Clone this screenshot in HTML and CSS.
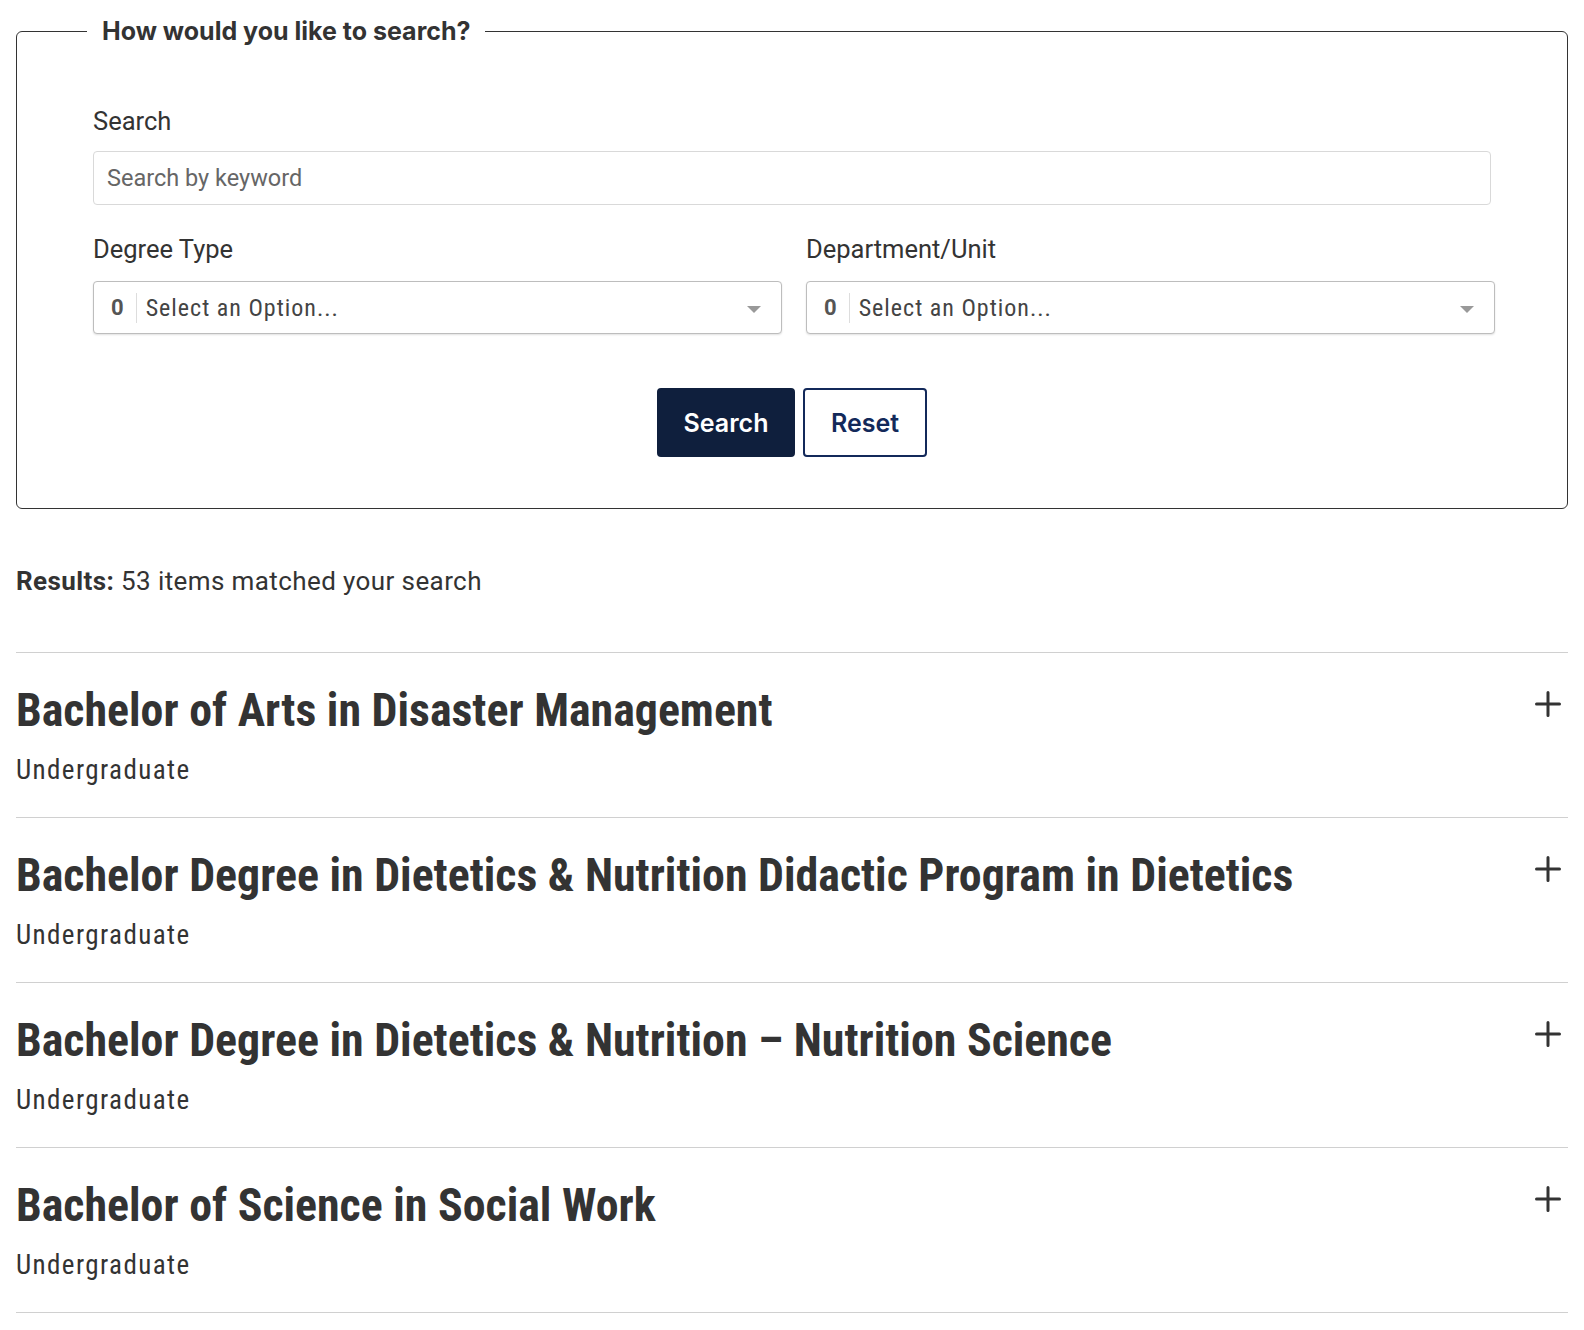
FILE: index.html
```html
<!DOCTYPE html>
<html lang="en">
<head>
<meta charset="utf-8">
<title>Program Search</title>
<link rel="stylesheet" href="styles.css">
</head>
<body>
<main class="page">
  <form class="search-form">
    <fieldset class="search-box">
      <legend class="search-legend">How would you like to search?</legend>
      <div class="field">
        <label class="field-label" for="kw">Search</label>
        <input class="text-input" id="kw" type="text" placeholder="Search by keyword">
      </div>
      <div class="select-row">
        <div class="field">
          <span class="field-label">Degree Type</span>
          <div class="select">
            <span class="select-count">0</span>
            <span class="select-text">Select an Option...</span>
            <span class="select-arrow"></span>
          </div>
        </div>
        <div class="field">
          <span class="field-label">Department/Unit</span>
          <div class="select">
            <span class="select-count">0</span>
            <span class="select-text">Select an Option...</span>
            <span class="select-arrow"></span>
          </div>
        </div>
      </div>
      <div class="actions">
        <button type="button" class="btn btn-primary">Search</button>
        <button type="button" class="btn btn-outline">Reset</button>
      </div>
    </fieldset>
  </form>

  <p class="results"><strong>Results:</strong> 53 items matched your search</p>

  <ul class="program-list">
    <li class="program">
      <div class="program-head">
        <h2 class="program-title">Bachelor of Arts in Disaster Management</h2>
        <svg class="plus" viewBox="0 0 26 26" aria-hidden="true"><path d="M13 1.5v23M1.5 13h23"/></svg>
      </div>
      <p class="program-type">Undergraduate</p>
    </li>
    <li class="program">
      <div class="program-head">
        <h2 class="program-title">Bachelor Degree in Dietetics &amp; Nutrition Didactic Program in Dietetics</h2>
        <svg class="plus" viewBox="0 0 26 26" aria-hidden="true"><path d="M13 1.5v23M1.5 13h23"/></svg>
      </div>
      <p class="program-type">Undergraduate</p>
    </li>
    <li class="program">
      <div class="program-head">
        <h2 class="program-title">Bachelor Degree in Dietetics &amp; Nutrition – Nutrition Science</h2>
        <svg class="plus" viewBox="0 0 26 26" aria-hidden="true"><path d="M13 1.5v23M1.5 13h23"/></svg>
      </div>
      <p class="program-type">Undergraduate</p>
    </li>
    <li class="program">
      <div class="program-head">
        <h2 class="program-title">Bachelor of Science in Social Work</h2>
        <svg class="plus" viewBox="0 0 26 26" aria-hidden="true"><path d="M13 1.5v23M1.5 13h23"/></svg>
      </div>
      <p class="program-type">Undergraduate</p>
    </li>
  </ul>
</main>
</body>
</html>
```
FILE: styles.css
```css
* { box-sizing: border-box; }

html, body {
  margin: 0;
  padding: 0;
  background: #fff;
}

body {
  font-family: Roboto, "Liberation Sans", sans-serif;
  color: #333;
}

.page {
  padding: 16px 16px 0;
}

.search-form { margin: 0; }

.search-box {
  margin: 0;
  border: 1px solid #333;
  border-radius: 6px;
  padding: 60px 76px 51px;
  min-width: 0;
}

.search-legend {
  font-family: Inter, Roboto, sans-serif;
  font-weight: 700;
  font-size: 25px;
  line-height: 30px;
  color: #333;
  padding: 0 15px;
  margin-left: -6px;
}

.field {
  display: flex;
  flex-direction: column;
}

.field-label {
  font-size: 25.5px;
  line-height: 30px;
  color: #333;
  margin-bottom: 15px;
}

.select-row .field-label {
  margin-bottom: 17px;
}

.text-input {
  display: block;
  width: 100%;
  height: 54px;
  border: 1px solid #d9d9d9;
  border-radius: 4px;
  background: #fff;
  padding: 0 13px;
  font-family: Roboto, sans-serif;
  font-size: 23.5px;
  color: #333;
  outline: none;
}

.text-input::placeholder { color: #666; }

.select-row {
  display: grid;
  grid-template-columns: 1fr 1fr;
  column-gap: 24px;
  margin-top: 29px;
  margin-right: -4px;
}

.select {
  display: flex;
  align-items: center;
  height: 53px;
  border: 1px solid #bdbdbd;
  border-radius: 4px;
  background: #fff;
  box-shadow: 0 1px 2px rgba(0,0,0,0.12);
  padding: 0 20px 0 17px;
}

.select-count {
  font-weight: 700;
  font-size: 22px;
  color: #555;
  padding-right: 12px;
  border-right: 1px solid #ddd;
  line-height: 30px;
}

.select-text {
  flex: 1;
  padding-left: 9px;
  font-family: "Roboto Condensed", Roboto, sans-serif;
  font-size: 24px;
  letter-spacing: 1px;
  color: #444;
}

.select-arrow {
  width: 0;
  height: 0;
  border-left: 7px solid transparent;
  border-right: 7px solid transparent;
  border-top: 7px solid #999;
  margin-top: 3px;
}

.actions {
  display: flex;
  justify-content: center;
  gap: 8px;
  margin-top: 54px;
}

.btn {
  height: 69px;
  border-radius: 4px;
  font-family: Inter, Roboto, sans-serif;
  font-weight: 600;
  font-size: 25px;
  cursor: pointer;
}

.btn-primary {
  width: 138px;
  background: #0f1f3d;
  border: 2px solid #0f1f3d;
  color: #fff;
}

.btn-outline {
  width: 124px;
  background: #fff;
  border: 2px solid #13295a;
  color: #13295a;
}

.results {
  margin: 57px 0 56px;
  font-size: 26px;
  letter-spacing: 0.4px;
  line-height: 30px;
  color: #333;
}

.results strong { font-weight: 700; }

.program-list {
  list-style: none;
  margin: 0;
  padding: 0;
  border-bottom: 1px solid #d0d0d0;
}

.program {
  border-top: 1px solid #d0d0d0;
  padding: 30px 0 32px;
}

.program-head {
  display: flex;
  justify-content: space-between;
  align-items: flex-start;
}

.program-title {
  margin: 0;
  font-family: "Roboto Condensed", Roboto, sans-serif;
  font-weight: 700;
  font-size: 45.9px;
  line-height: 55px;
  color: #333;
}

.plus {
  width: 26px;
  height: 26px;
  margin-top: 8px;
  margin-right: 7px;
  flex-shrink: 0;
  fill: none;
  stroke: #333;
  stroke-width: 3;
  stroke-linecap: round;
}

.program-type {
  margin: 17px 0 0;
  font-family: "Roboto Condensed", Roboto, sans-serif;
  font-size: 27px;
  letter-spacing: 1.4px;
  line-height: 30px;
  color: #333;
}
```
